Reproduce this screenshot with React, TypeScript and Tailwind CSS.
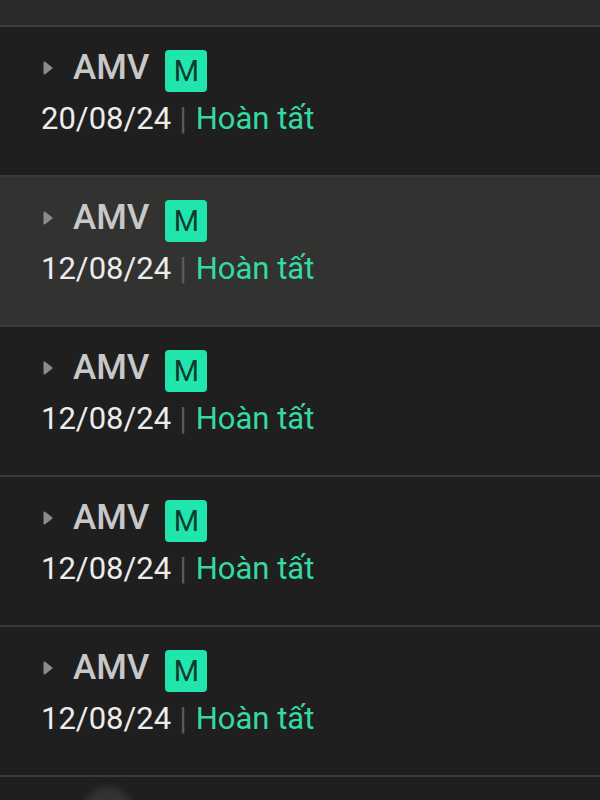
const rows = [
  { date: "20/08/24", active: false },
  { date: "12/08/24", active: true },
  { date: "12/08/24", active: false },
  { date: "12/08/24", active: false },
  { date: "12/08/24", active: false },
];

function Caret() {
  return (
    <svg width="10" height="14" viewBox="0 0 10 14" className="mt-[11px] shrink-0">
      <path d="M1.5 1.5 L8.5 7 L1.5 12.5 Z" fill="#8c8c8c" stroke="#8c8c8c" strokeWidth="2" strokeLinejoin="round" />
    </svg>
  );
}

function OrderRow({ date, active }: { date: string; active: boolean }) {
  return (
    <div
      className={`h-[150px] border-b-2 border-[#3a3a3a] pl-[41px] pt-[23px] ${
        active ? "bg-[#323230]" : "bg-[#1f1f1f]"
      }`}
    >
      <div className="flex h-[42px] items-start">
        <div className="ml-[2px] flex">
          <Caret />
        </div>
        <span className="ml-[20px] text-[35px] font-medium leading-[36px] text-[#c8c8c8]">AMV</span>
        <span className="ml-[16px] flex h-[42px] w-[42px] items-center justify-center rounded-[4px] bg-[#20e6ae] text-[29px] leading-none text-[#0e3b2e]">
          M
        </span>
      </div>
      <div className="mt-[9px] flex items-center text-[31px] leading-[36px]">
        <span className="text-[#ececec]">{date}</span>
        <span className="ml-[8px] mr-[9px] text-[#5c5c5c]">|</span>
        <span className="text-[#34d9a3]">Hoàn tất</span>
      </div>
    </div>
  );
}

export default function App() {
  return (
    <div className="h-[800px] w-[600px] overflow-hidden bg-[#1f1f1f] font-['Roboto',sans-serif]">
      <div className="h-[27px] border-b-2 border-[#3d3d3d] bg-[#2a2a2a]" />
      {rows.map((r, i) => (
        <OrderRow key={i} date={r.date} active={r.active} />
      ))}
      <div className="pl-[83px] pt-[10px]">
        <div className="h-[50px] w-[50px] rounded-full bg-[#333333] blur-[3px]" />
      </div>
    </div>
  );
}
